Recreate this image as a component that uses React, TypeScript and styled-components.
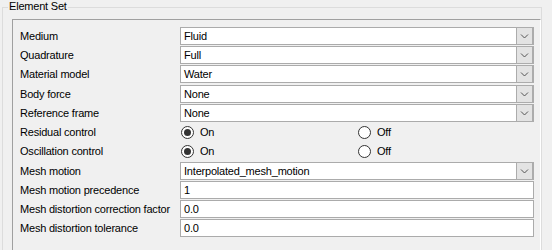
import { Fragment } from 'react';
import styled, { createGlobalStyle } from 'styled-components';

const GlobalStyle = createGlobalStyle`
  html, body {
    margin: 0;
    padding: 0;
    background: #f0f0f0;
  }

  body {
    font-family: 'Liberation Sans', Arial, sans-serif;
    font-size: 11px;
    letter-spacing: -0.2px;
    color: #000;
  }
`;

const Window = styled.div`
  width: 552px;
  height: 250px;
  overflow: hidden;
  box-sizing: border-box;
  padding: 7px 0 0 2px;
`;

const GroupBox = styled.div`
  position: relative;
  width: 540px;
  height: 260px;
  box-sizing: border-box;
  padding: 11px 0 0 9px;
  border: 1px solid #dcdcdc;
  border-bottom: none;
`;

const GroupTitle = styled.span`
  position: absolute;
  top: -8px;
  left: 5px;
  padding: 0 1px;
  line-height: 13px;
  background: #f0f0f0;
`;

const Panel = styled.div`
  width: 529px;
  height: 250px;
  box-sizing: border-box;
  padding: 6.75px 0 0 7px;
  border-top: 1px solid #a0a0a0;
  border-left: 1px solid #a0a0a0;
  border-right: 1px solid #fff;
`;

const Form = styled.div`
  display: grid;
  grid-template-columns: 160px 354px;
  grid-auto-rows: 19.25px;
`;

const Label = styled.div`
  height: 18px;
  line-height: 18px;
  white-space: nowrap;
`;

const Field = styled.div`
  display: flex;
  height: 18px;
  box-sizing: border-box;
  border: 1px solid #ababab;
  background: #fff;
`;

const FieldText = styled.div`
  flex: 1;
  padding-left: 3px;
  line-height: 16px;
  white-space: nowrap;
  overflow: hidden;
`;

const DropButton = styled.div`
  display: flex;
  align-items: center;
  justify-content: center;
  width: 15px;
  margin: -1px -1px -1px 0;
  border: 1px solid #acacac;
  border-right-width: 2px;
  background: #e3e3e3;
`;

const RadioRow = styled.div`
  display: grid;
  grid-template-columns: 177px 177px;
  height: 18px;
  align-items: center;
`;

const RadioOption = styled.label`
  display: flex;
  align-items: center;
  padding-left: 1px;
  gap: 6px;
`;

const RadioCircle = styled.span<{ $checked?: boolean }>`
  display: flex;
  align-items: center;
  justify-content: center;
  width: 13px;
  height: 13px;
  box-sizing: border-box;
  border: 1px solid #333;
  border-radius: 50%;
  background: #fff;

  &::after {
    content: '';
    display: ${(p) => (p.$checked ? 'block' : 'none')};
    width: 7px;
    height: 7px;
    border-radius: 50%;
    background: #333;
  }
`;

type Row =
  | { kind: 'combo'; label: string; value: string }
  | { kind: 'text'; label: string; value: string }
  | { kind: 'radio'; label: string; on: boolean };

const rows: Row[] = [
  { kind: 'combo', label: 'Medium', value: 'Fluid' },
  { kind: 'combo', label: 'Quadrature', value: 'Full' },
  { kind: 'combo', label: 'Material model', value: 'Water' },
  { kind: 'combo', label: 'Body force', value: 'None' },
  { kind: 'combo', label: 'Reference frame', value: 'None' },
  { kind: 'radio', label: 'Residual control', on: true },
  { kind: 'radio', label: 'Oscillation control', on: true },
  { kind: 'combo', label: 'Mesh motion', value: 'Interpolated_mesh_motion' },
  { kind: 'text', label: 'Mesh motion precedence', value: '1' },
  { kind: 'text', label: 'Mesh distortion correction factor', value: '0.0' },
  { kind: 'text', label: 'Mesh distortion tolerance', value: '0.0' },
];

const Chevron = () => (
  <svg width="9" height="6" viewBox="0 0 9 6">
    <polyline points="1,1.5 4.5,5 8,1.5" fill="none" stroke="#555" strokeWidth="1" />
  </svg>
);

const Control = ({ row }: { row: Row }) => {
  if (row.kind === 'radio') {
    return (
      <RadioRow>
        <RadioOption>
          <RadioCircle $checked={row.on} />
          On
        </RadioOption>
        <RadioOption>
          <RadioCircle $checked={!row.on} />
          Off
        </RadioOption>
      </RadioRow>
    );
  }

  return (
    <Field>
      <FieldText>{row.value}</FieldText>
      {row.kind === 'combo' ?
        <DropButton>
          <Chevron />
        </DropButton> :
        null}
    </Field>
  );
};

export default function App() {
  return (
    <Window>
      <GlobalStyle />
      <GroupBox>
        <GroupTitle>Element Set</GroupTitle>
        <Panel>
          <Form>
            {rows.map((row) => (
              <Fragment key={row.label}>
                <Label>{row.label}</Label>
                <Control row={row} />
              </Fragment>
            ))}
          </Form>
        </Panel>
      </GroupBox>
    </Window>
  );
}
